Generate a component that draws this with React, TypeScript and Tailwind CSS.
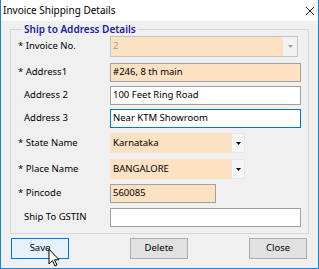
const font = { fontFamily: '"Noto Sans", "Liberation Sans", sans-serif' }

type RowProps = {
  label: string
  indent?: boolean
  mt: string
  children: React.ReactNode
}

const Row = ({ label, indent, mt, children }: RowProps) => (
  <div className={`flex items-center ${mt}`}>
    <div className={`w-[92px] shrink-0 ${indent ? 'pl-[6px]' : ''}`}>{label}</div>
    {children}
  </div>
)

const Arrow = ({ color }: { color: string }) => (
  <svg width="5" height="3" viewBox="0 0 5 3">
    <path d="M0 0h5L2.5 3z" fill={color} />
  </svg>
)

const Field = ({ value, peach, focus, w = 'w-[191px]' }: { value: string; peach?: boolean; focus?: boolean; w?: string }) => (
  <div
    className={`${w} h-[19px] flex items-center px-[2px] border ${
      focus ? 'border-[#0078d7] bg-white' : peach ? 'border-[#a0a0a0] bg-[#fde1c3]' : 'border-[#a0a0a0] bg-white'
    }`}
  >
    {value}
  </div>
)

const Combo = ({ value }: { value: string }) => (
  <div className="flex h-[20px] w-[135px]">
    <div className="flex-1 bg-[#fde1c3] flex items-center px-[3px]">{value}</div>
    <div className="w-[14px] bg-[#f5f5f5] border border-[#e8e8e8] flex items-center justify-center">
      <Arrow color="#000" />
    </div>
  </div>
)

const Btn = ({ label, active }: { label: string; active?: boolean }) => (
  <button
    className={`w-[58px] h-[21px] border flex items-center justify-center ${
      active ? 'border-[#0078d7] bg-[#e5f1fb]' : 'border-[#adadad] bg-[#e1e1e1]'
    }`}
  >
    {label}
  </button>
)

export default function App() {
  return (
    <div
      className="w-[319px] h-[269px] flex flex-col border-x border-b border-[#1883d7] bg-[#f0f0f0] text-[9.5px] text-black relative"
      style={font}
    >
      <div className="h-[21px] shrink-0 bg-white flex items-center justify-between pl-[2px] pr-[3px] text-[10px]">
        <span>Invoice Shipping Details</span>
        <svg width="10" height="10" viewBox="0 0 10 10">
          <path d="M1 1l8 8M9 1l-8 8" stroke="#222" strokeWidth="1" />
        </svg>
      </div>

      <fieldset className="mt-[2px] ml-[9px] w-[295px] h-[211px] border border-[#d6d6d6] px-[7px]">
        <legend className="px-[1px] ml-[5px] text-[#1a1aa0] font-semibold text-[10px] leading-[12px]">
          Ship to Address Details
        </legend>

        <Row label="* Invoice No." mt="mt-[1px]">
          <div className="flex h-[21px] w-[188px] border border-[#c4c4c4] bg-[#f2f2f2]">
            <div className="flex-1 bg-[#fde1c3] flex items-center px-[2px] text-[#a0a0a0]">2</div>
            <div className="w-[14px] flex items-center justify-center">
              <Arrow color="#a0a0a0" />
            </div>
          </div>
        </Row>
        <Row label="* Address1" mt="mt-[6px]">
          <Field value="#246, 8 th main" peach />
        </Row>
        <Row label="Address 2" indent mt="mt-[4px]">
          <Field value="100 Feet Ring Road" />
        </Row>
        <Row label="Address 3" indent mt="mt-[4px]">
          <Field value="Near KTM Showroom" focus />
        </Row>
        <Row label="* State Name" mt="mt-[5px]">
          <Combo value="Karnataka" />
        </Row>
        <Row label="* Place Name" mt="mt-[6px]">
          <Combo value="BANGALORE" />
        </Row>
        <Row label="* Pincode" mt="mt-[5px]">
          <Field value="560085" peach w="w-[106px]" />
        </Row>
        <Row label="Ship To GSTIN" indent mt="mt-[5px]">
          <Field value="" />
        </Row>
      </fieldset>

      <div className="flex justify-between ml-[10px] mr-[11px] mt-[4px]">
        <Btn label="Save" active />
        <Btn label="Delete" />
        <Btn label="Close" />
      </div>

      <svg className="absolute left-[47px] top-[248px]" width="12" height="19" viewBox="0 0 12 19">
        <path d="M1 1v15l3.5-3.5 2.5 5.5 2-1-2.5-5.2H11z" fill="#fff" stroke="#000" strokeWidth="1" />
      </svg>
    </div>
  )
}
